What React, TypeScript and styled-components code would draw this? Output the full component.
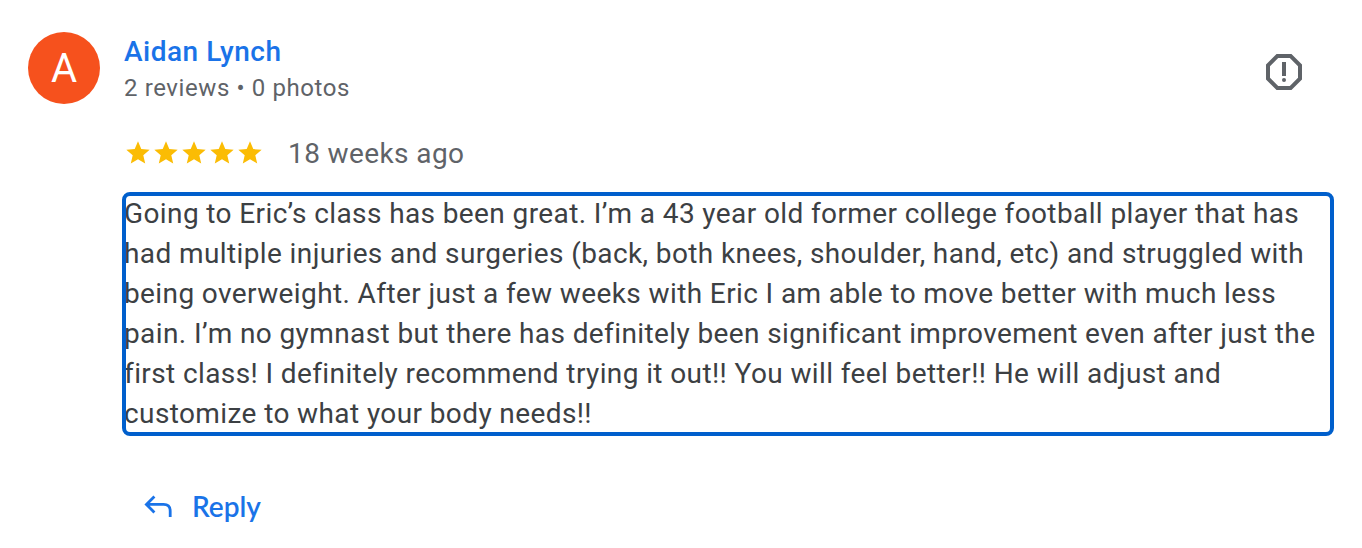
import React from "react";
import styled, { createGlobalStyle } from "styled-components";

const GlobalStyle = createGlobalStyle`
  * { box-sizing: border-box; }
  body { margin: 0; background: #fff; font-family: Roboto, "Liberation Sans", sans-serif; color: #3c4043; }
`;

const Review = styled.article`
  display: grid;
  grid-template-columns: 72px minmax(0, 1fr);
  column-gap: 24px;
  padding: 32px 30px 20px 28px;
`;

const Avatar = styled.div`
  display: flex;
  align-items: center;
  justify-content: center;
  width: 72px;
  height: 72px;
  padding-top: 2px;
  border-radius: 50%;
  background: #f6511d;
  color: #fff;
  font-size: 40px;
  line-height: 48px;
`;

const Header = styled.header`
  display: flex;
  justify-content: space-between;
  align-items: center;
  min-height: 80px;
  padding-right: 30px;
`;

const Author = styled.div`
  display: flex;
  flex-direction: column;
  align-items: flex-start;
  padding-bottom: 8px;
`;

const AuthorLink = styled.a`
  color: #1a73e8;
  font-size: 28px;
  font-weight: 500;
  line-height: 40px;
  letter-spacing: 0.018em;
  text-decoration: none;
`;

const Stats = styled.span`
  color: #5f6368;
  font-size: 24px;
  line-height: 32px;
  letter-spacing: 0.025em;
`;

const IconButton = styled.button`
  display: flex;
  padding: 0;
  border: 0;
  background: none;
  color: #5f6368;
  cursor: pointer;
`;

const Rating = styled.div`
  display: flex;
  align-items: center;
  min-height: 82px;
  padding-top: 2px;
  gap: 24px;
`;

const Stars = styled.div`
  display: flex;
  padding-bottom: 2px;
  color: #fbbc04;
`;

const Time = styled.time`
  color: #5f6368;
  font-size: 28px;
  line-height: 40px;
  letter-spacing: 0.014em;
`;

const Body = styled.p`
  margin: 0;
  outline: 4px solid #005fcc;
  outline-offset: -2px;
  border-radius: 6px;
  font-size: 28px;
  line-height: 40px;
  letter-spacing: 0.014em;
`;

const ReplyButton = styled.button`
  display: flex;
  align-items: center;
  gap: 20px;
  margin: 52px 0 0 20px;
  padding: 0;
  border: 0;
  background: none;
  color: #1a73e8;
  font-family: Lato, Roboto, sans-serif;
  font-size: 28px;
  font-weight: 600;
  line-height: 40px;
  cursor: pointer;
`;

export default function App() {
  return (
    <>
      <GlobalStyle />
      <Review>
        <Avatar>A</Avatar>
        <div>
          <Header>
            <Author>
              <AuthorLink href="#author">Aidan Lynch</AuthorLink>
              <Stats>2 reviews • 0 photos</Stats>
            </Author>
            <IconButton aria-label="Report review">
              <svg width="36" height="36" viewBox="3 3 18 18" fill="currentColor">
                <path d="M15.73 3H8.27L3 8.27v7.46L8.27 21h7.46L21 15.73V8.27L15.73 3zM19 14.9L14.9 19H9.1L5 14.9V9.1L9.1 5h5.8L19 9.1v5.8z" />
                <circle cx="12" cy="16" r="1" />
                <path d="M11 7h2v7h-2z" />
              </svg>
            </IconButton>
          </Header>
          <Rating>
            <Stars role="img" aria-label="5 out of 5 stars">
              {[1, 2, 3, 4, 5].map((n) => (
                <svg key={n} width="28" height="28" viewBox="0 0 24 24" fill="currentColor">
                  <path d="M12 17.27L18.18 21l-1.64-7.03L22 9.24l-7.19-.61L12 2 9.19 8.63 2 9.24l5.46 4.73L5.82 21z" />
                </svg>
              ))}
            </Stars>
            <Time>18 weeks ago</Time>
          </Rating>
          <Body>
            Going to Eric’s class has been great. I’m a 43 year old former college football player that has
            had multiple injuries and surgeries (back, both knees, shoulder, hand, etc) and struggled with
            being overweight. After just a few weeks with Eric I am able to move better with much less
            pain. I’m no gymnast but there has definitely been significant improvement even after just the
            first class! I definitely recommend trying it out!! You will feel better!! He will adjust and
            customize to what your body needs!!
          </Body>
          <ReplyButton>
            <svg width="28" height="22" viewBox="0 0 28 22" fill="none" stroke="currentColor" strokeWidth="2.8">
              <path d="M10.4 1.4L2.4 9.4l8 8M2.4 9.4h17.2q6.6 0 6.6 6.6v6" />
            </svg>
            Reply
          </ReplyButton>
        </div>
      </Review>
    </>
  );
}
